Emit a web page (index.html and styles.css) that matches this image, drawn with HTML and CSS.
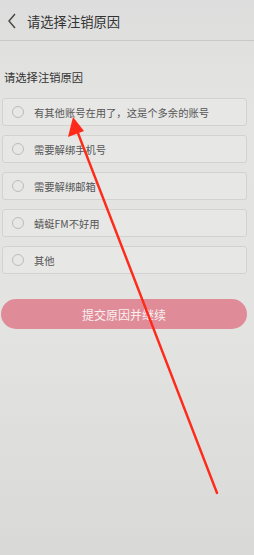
FILE: index.html
```html
<!DOCTYPE html>
<html lang="zh-CN">
<head>
    <meta charset="UTF-8">
    <meta name="viewport" content="width=device-width, initial-scale=1.0">
    <title>请选择注销原因</title>
    <link rel="stylesheet" href="styles.css">
</head>
<body>
    <div class="page">
        <div class="header">
            <span class="back">
                <svg width="10" height="16" viewBox="0 0 10 16"><path d="M8 1 L2 8 L8 15" fill="none" stroke="#444" stroke-width="1.4"/></svg>
            </span>
            <span class="title">请选择注销原因</span>
        </div>

        <div class="label">请选择注销原因</div>

        <div class="options">
            <div class="option"><span class="radio"></span>有其他账号在用了，这是个多余的账号</div>
            <div class="option"><span class="radio"></span>需要解绑手机号</div>
            <div class="option"><span class="radio"></span>需要解绑邮箱</div>
            <div class="option"><span class="radio"></span>蜻蜓FM不好用</div>
            <div class="option"><span class="radio"></span>其他</div>
        </div>

        <button class="submit">提交原因并继续</button>

        <svg class="arrow" width="254" height="555" viewBox="0 0 254 555">
            <line x1="217" y1="493" x2="76" y2="128" stroke="#ff2a1a" stroke-width="2.4" stroke-linecap="round"/>
            <polygon points="73,117 68,137 84,131" fill="#ff2a1a"/>
        </svg>
    </div>
</body>
</html>
```

FILE: styles.css
```css
* {
    box-sizing: border-box;
    margin: 0;
    padding: 0;
    font-family: "Noto Sans CJK SC", "Noto Sans", sans-serif;
}

body {
    background-color: #e1e1df;
}

.page {
    position: relative;
    width: 254px;
    height: 555px;
    overflow: hidden;
    background: linear-gradient(180deg, #dddddd 0%, #e4e4e2 20%, #e3e4e1 60%, #d9dad7 100%);
}

.header {
    display: flex;
    align-items: center;
    height: 41px;
    padding: 2px 0 0 7px;
    border-bottom: 1px solid #c8c8c8;
}

.back {
    display: flex;
    width: 20px;
}

.title {
    font-size: 13.3px;
    color: #333;
}

.label {
    margin: 28px 0 0 4px;
    font-size: 11.3px;
    color: #333;
    line-height: 17px;
}

.options {
    display: flex;
    flex-direction: column;
    gap: 9px;
    margin: 12px 7px 0 2px;
}

.option {
    display: flex;
    align-items: center;
    height: 28px;
    padding-left: 9px;
    border: 1px solid #d2d2d0;
    border-radius: 3px;
    background-color: #e7e7e5;
    font-size: 10.3px;
    color: #555;
}

.radio {
    width: 12px;
    height: 12px;
    margin-right: 10px;
    border: 1px solid #bcbcbc;
    border-radius: 50%;
}

.submit {
    display: block;
    width: 246px;
    height: 30px;
    margin: 25px 0 0 1px;
    border: none;
    border-radius: 15px;
    background-color: #e08c98;
    color: #f8f0f0;
    font-size: 12px;
}

.arrow {
    position: absolute;
    left: 0;
    top: 0;
}
```
